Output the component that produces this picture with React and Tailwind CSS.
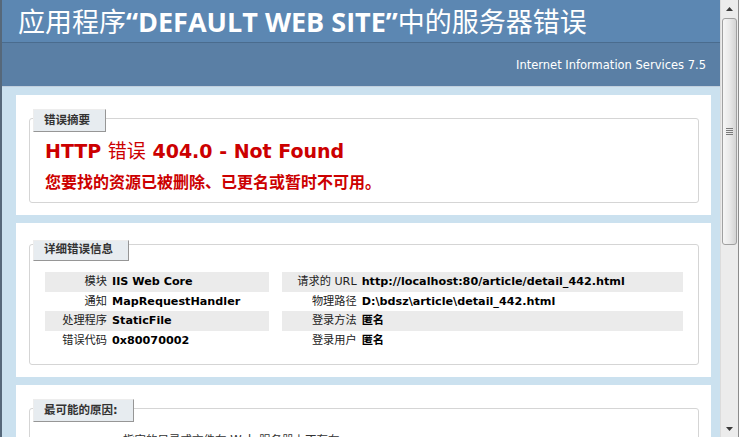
import React from 'react';

const base = "font-['DejaVu_Sans','Noto_Sans_CJK_SC',sans-serif]";

const leftRows = [
  ['模块', 'IIS Web Core'],
  ['通知', 'MapRequestHandler'],
  ['处理程序', 'StaticFile'],
  ['错误代码', '0x80070002'],
];

const rightRows = [
  ['请求的 URL', 'http://localhost:80/article/detail_442.html'],
  ['物理路径', 'D:\\bdsz\\article\\detail_442.html'],
  ['登录方法', '匿名'],
  ['登录用户', '匿名'],
];

const Legend = ({ children, className = '' }) => (
  <div
    className={`w-fit -ml-[12px] pl-[10px] pr-[15px] border-t border-l border-t-[#EDEDED] border-l-[#EDEDED] border-r border-b border-r-[#969696] border-b-[#969696] bg-[#E7ECF0] text-[#333333] font-bold text-[11.5px] leading-[13px] whitespace-nowrap ${className}`}
  >
    {children}
  </div>
);

const DetailTable = ({ rows, labelCol }) => (
  <div className="mt-[4px]">
    {rows.map(([label, value], i) => (
      <div
        key={label}
        className={`grid ${labelCol} text-[11.2px] leading-[13.5px] py-[3px] ${i % 2 === 0 ? 'bg-[#ebebeb]' : ''}`}
      >
        <div className="text-right pr-[5px] text-[#222] whitespace-nowrap">{label}</div>
        <div className="font-bold text-black whitespace-nowrap">{value}</div>
      </div>
    ))}
  </div>
);

const Scrollbar = () => (
  <div className="w-[19px] h-[437px] flex flex-col bg-[#ececec] border-l border-[#dcdcdc] border-r border-r-[#8c8c8c]">
    <div className="h-[17px] flex items-center justify-center">
      <svg width="7" height="4" viewBox="0 0 7 4">
        <path d="M3.5 0 L7 4 L0 4 Z" fill="#3a3a3a" />
      </svg>
    </div>
    <div className="mt-[1px] mx-[1px] h-[227px] rounded-[3px] border border-[#a0a0a0] bg-gradient-to-r from-[#f6f6f6] via-[#e9e9e9] to-[#d4d4d4] flex items-center justify-center">
      <div className="flex flex-col gap-[1px]">
        <div className="w-[7px] h-[1px] bg-[#7a7a7a]" />
        <div className="w-[7px] h-[1px] bg-[#7a7a7a]" />
        <div className="w-[7px] h-[1px] bg-[#7a7a7a]" />
        <div className="w-[7px] h-[1px] bg-[#7a7a7a]" />
      </div>
    </div>
    <div className="flex-1" />
    <div className="h-[17px] flex items-center justify-center">
      <svg width="7" height="4" viewBox="0 0 7 4">
        <path d="M0 0 L7 0 L3.5 4 Z" fill="#3a3a3a" />
      </svg>
    </div>
  </div>
);

export default function App() {
  return (
    <div className={`flex w-[739px] h-[437px] overflow-hidden ${base}`}>
      <div className="flex-1 h-[437px] overflow-hidden bg-[#CBE1EF] border-l-2 border-[#56687a]">
        {/* Header */}
        <div className="h-[42px] bg-[#5C87B2] pl-[16px] pt-[4px]">
          <h1 className="text-white text-[27px] leading-[33px] whitespace-nowrap font-['Noto_Sans_CJK_SC',sans-serif]">
            应用程序
            <span className="font-bold font-['Open_Sans',sans-serif]">“DEFAULT WEB SITE”</span>
            中的服务器错误
          </h1>
        </div>
        <div className="h-[45px] border-t border-[#4A6C8E] border-b border-b-[#C1CFDD] bg-[#5A7FA5] pt-[15px] pr-[14px] text-right text-white text-[11.5px] leading-[14px]">
          Internet Information Services 7.5
        </div>

        {/* Summary */}
        <div className="ml-[14px] w-[695px] mt-[8px] bg-white pt-[10px] px-[10px] pb-[12px]">
          <div className="mt-[13px] ml-[3px] mr-[2px] border border-[#d5d5d5] rounded-[3px] px-[15px] pb-[10px]">
            <Legend className="-mt-[10px] py-[4px]">错误摘要</Legend>
            <h2 className="mt-[8px] text-[#CC0000] text-[19px] leading-[23px] font-bold whitespace-nowrap">
              HTTP <span className="font-normal">错误</span> 404.0 - Not Found
            </h2>
            <h3 className="mt-[10px] text-[#CC0000] text-[16px] leading-[19px] font-bold whitespace-nowrap">
              您要找的资源已被删除、已更名或暂时不可用。
            </h3>
          </div>
        </div>

        {/* Details */}
        <div className="ml-[14px] w-[695px] mt-[8px] bg-white pt-[10px] px-[10px] pb-[12px]">
          <div className="mt-[11px] ml-[3px] mr-[2px] border border-[#d5d5d5] rounded-[3px] px-[15px] pb-[10px]">
            <Legend className="-mt-[5px] pt-[2px] pb-[4px]">详细错误信息</Legend>
            <div className="mt-[7px] flex">
              <div className="w-[224px] mr-[13px]">
                <DetailTable rows={leftRows} labelCol="grid-cols-[67px_1fr]" />
              </div>
              <div className="w-[402px]">
                <DetailTable rows={rightRows} labelCol="grid-cols-[80px_1fr]" />
              </div>
            </div>
            <div className="h-[4px]" />
          </div>
        </div>

        {/* Causes */}
        <div className="ml-[14px] w-[695px] mt-[8px] bg-white pt-[10px] px-[10px] pb-[11px]">
          <div className="mt-[13px] ml-[3px] mr-[2px] border border-[#d5d5d5] rounded-[3px] px-[15px] pb-[10px]">
            <Legend className="-mt-[10px] py-[4px]">最可能的原因:</Legend>
            <ul className="mt-[10px] ml-[78px] list-disc text-[11.5px] leading-[16px] text-[#333]">
              <li>指定的目录或文件在 Web 服务器上不存在。</li>
              <li>URL 拼写错误。</li>
              <li>某个自定义筛选器或模块(如 URLScan)限制了对该文件的访问。</li>
            </ul>
          </div>
        </div>
      </div>
      <Scrollbar />
    </div>
  );
}
